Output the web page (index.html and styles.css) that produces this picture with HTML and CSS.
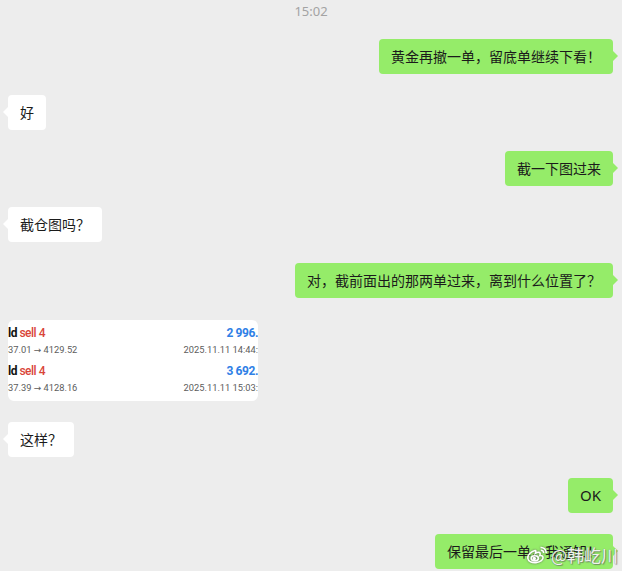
FILE: index.html
```html
<!DOCTYPE html>
<html lang="zh-CN">
<head>
<meta charset="utf-8">
<title>Chat</title>
<link rel="stylesheet" href="styles.css">
</head>
<body>
<div class="chat">
  <div class="time">15:02</div>
  <div class="list">
    <div class="row me"><div class="bubble">黄金再撤一单，留底单继续下看！</div></div>
    <div class="row other"><div class="bubble">好</div></div>
    <div class="row me"><div class="bubble">截一下图过来</div></div>
    <div class="row other"><div class="bubble">截仓图吗？</div></div>
    <div class="row me"><div class="bubble">对，截前面出的那两单过来，离到什么位置了？</div></div>
    <div class="row other">
      <div class="card">
        <div class="item">
          <div class="line">
            <span class="title"><b>ld</b> <span class="sell">sell 4</span></span>
            <span class="profit">2 996.</span>
          </div>
          <div class="line sub">
            <span>37.01 <span class="arrow">→</span> 4129.52</span>
            <span class="date">2025.11.11 14:44:</span>
          </div>
        </div>
        <div class="item">
          <div class="line">
            <span class="title"><b>ld</b> <span class="sell">sell 4</span></span>
            <span class="profit">3 692.</span>
          </div>
          <div class="line sub">
            <span>37.39 <span class="arrow">→</span> 4128.16</span>
            <span class="date">2025.11.11 15:03:</span>
          </div>
        </div>
        <div class="sep"></div>
      </div>
    </div>
    <div class="row other"><div class="bubble">这样？</div></div>
    <div class="row me"><div class="bubble latin">OK</div></div>
    <div class="row me last">
      <div class="bubble">保留最后一单，我通知！</div>
      <div class="watermark">
        <svg class="wb" width="22" height="18" viewBox="0 0 22 18" fill="none" stroke="#ffffff" stroke-width="1.6">
          <path d="M9 4.5C5 5.5 1.5 9 1.8 12.2C2.2 15.5 6 17 10 16.6C14.5 16.2 17.5 13.8 17 11.2C16.7 9.6 15 9.2 13.8 9.6C14.5 8 14.3 6.7 13 6.4C11.8 6.1 10.3 6.8 9.4 7.4C10 5.6 10 4.3 9 4.5Z"/>
          <ellipse cx="8.8" cy="12.3" rx="3.6" ry="2.6"/>
          <circle cx="8.3" cy="12.5" r="0.9" fill="#ffffff"/>
          <path d="M14.5 1.5C17.5 1.2 20.5 3.5 20.2 7"/>
          <path d="M14.8 4.2C16.4 4.1 17.8 5.2 17.6 7"/>
        </svg>
        <span>@韩屹川</span>
      </div>
    </div>
  </div>
</div>
</body>
</html>
```

FILE: styles.css
```css
html, body {
  margin: 0;
  padding: 0;
  background: #ededed;
}

.chat {
  width: 622px;
  height: 571px;
  overflow: hidden;
  font-family: "Noto Sans CJK SC", "Noto Sans", sans-serif;
  color: #1b1b1b;
}

.time {
  height: 22px;
  line-height: 22px;
  text-align: center;
  font-family: "Noto Sans", "Noto Sans CJK SC", sans-serif;
  font-size: 13px;
  color: #a3a3a3;
  margin-bottom: 17px;
}

.list {
  display: flex;
  flex-direction: column;
  gap: 21px;
  padding: 0 9px 0 8px;
}

.row {
  display: flex;
  position: relative;
}

.row.me {
  justify-content: flex-end;
}

.row.other {
  justify-content: flex-start;
}

.bubble {
  position: relative;
  height: 35px;
  line-height: 35px;
  padding: 0 12px;
  border-radius: 4px;
  font-size: 14px;
  white-space: nowrap;
}

.bubble.latin {
  font-family: "Noto Sans", sans-serif;
  font-size: 15px;
}

.me .bubble {
  background: #95ec69;
}

.other .bubble {
  background: #ffffff;
}

.bubble::after {
  content: "";
  position: absolute;
  top: 12px;
  border-top: 5px solid transparent;
  border-bottom: 5px solid transparent;
}

.me .bubble::after {
  right: -5px;
  border-left: 5px solid #95ec69;
}

.other .bubble::after {
  left: -5px;
  border-right: 5px solid #ffffff;
}

/* screenshot card */
.card {
  width: 250px;
  height: 81px;
  background: #ffffff;
  border-radius: 6px;
  overflow: hidden;
  box-sizing: border-box;
  padding-top: 5px;
  font-family: "Roboto", "Noto Sans", sans-serif;
  margin-top: 1px;
}

.item {
  height: 32px;
  margin-bottom: 6px;
}

.item:last-of-type {
  margin-bottom: 2px;
}

.line {
  display: flex;
  justify-content: space-between;
  align-items: center;
  height: 16px;
  white-space: nowrap;
}

.title {
  font-size: 12px;
  font-weight: 500;
  letter-spacing: -0.5px;
}

.title b {
  color: #111111;
  font-weight: 700;
}

.sell {
  color: #d9453a;
}

.profit {
  color: #2f80e6;
  font-size: 12px;
  font-weight: 700;
  letter-spacing: -0.4px;
  margin-right: 0;
}

.sub {
  font-size: 9.3px;
  color: #5c5c5c;
}

.arrow {
  font-family: "DejaVu Sans", sans-serif;
  font-size: 9px;
}

.date {
  margin-right: 0;
}

.sep {
  height: 1px;
  background: #ececec;
}

/* watermark overlay */
.watermark {
  position: absolute;
  right: -9px;
  top: 8px;
  display: flex;
  align-items: center;
  gap: 3px;
  color: rgba(255, 255, 255, 0.92);
  font-size: 17px;
  text-shadow: 0 0 1px rgba(90, 90, 90, 0.8), 1px 1px 1px rgba(90, 90, 90, 0.6);
  width: 96px;
}

.wb {
  filter: drop-shadow(0 0 1px rgba(80, 80, 80, 0.8));
}
```
